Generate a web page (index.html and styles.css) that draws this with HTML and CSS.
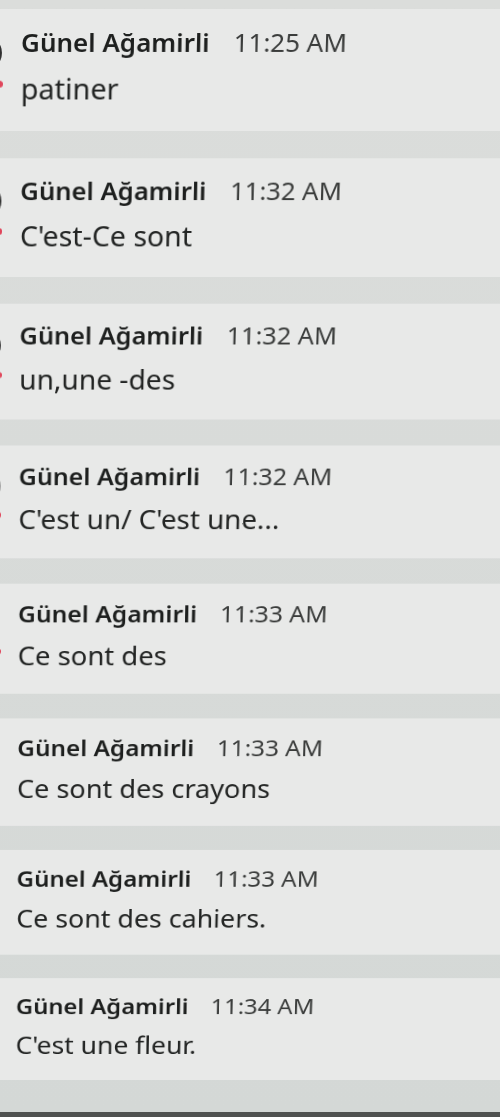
FILE: index.html
```html
<!DOCTYPE html>
<html lang="fr">
<head>
    <meta charset="UTF-8">
    <meta name="viewport" content="width=device-width, initial-scale=1.0">
    <title>Discussion</title>
    <link rel="stylesheet" href="styles.css">
</head>
<body>
    <!-- Ecran (zone de messages) -->
    <div class="screen">
        <div class="chat">
            <div class="message">
                <div class="avatar"></div>
                <div class="message-body">
                    <div class="message-head"><span class="author">Günel Ağamirli</span><span class="time">11:25 AM</span></div>
                    <p class="text">patiner</p>
                </div>
            </div>
            <div class="message">
                <div class="avatar"></div>
                <div class="message-body">
                    <div class="message-head"><span class="author">Günel Ağamirli</span><span class="time">11:32 AM</span></div>
                    <p class="text">C'est-Ce sont</p>
                </div>
            </div>
            <div class="message">
                <div class="avatar"></div>
                <div class="message-body">
                    <div class="message-head"><span class="author">Günel Ağamirli</span><span class="time">11:32 AM</span></div>
                    <p class="text">un,une -des</p>
                </div>
            </div>
            <div class="message">
                <div class="avatar"></div>
                <div class="message-body">
                    <div class="message-head"><span class="author">Günel Ağamirli</span><span class="time">11:32 AM</span></div>
                    <p class="text">C'est un/ C'est une...</p>
                </div>
            </div>
            <div class="message">
                <div class="avatar"></div>
                <div class="message-body">
                    <div class="message-head"><span class="author">Günel Ağamirli</span><span class="time">11:33 AM</span></div>
                    <p class="text">Ce sont des</p>
                </div>
            </div>
            <div class="message">
                <div class="avatar"></div>
                <div class="message-body">
                    <div class="message-head"><span class="author">Günel Ağamirli</span><span class="time">11:33 AM</span></div>
                    <p class="text">Ce sont des crayons</p>
                </div>
            </div>
            <div class="message">
                <div class="avatar"></div>
                <div class="message-body">
                    <div class="message-head"><span class="author">Günel Ağamirli</span><span class="time">11:33 AM</span></div>
                    <p class="text">Ce sont des cahiers.</p>
                </div>
            </div>
            <div class="message">
                <div class="avatar"></div>
                <div class="message-body">
                    <div class="message-head"><span class="author">Günel Ağamirli</span><span class="time">11:34 AM</span></div>
                    <p class="text">C'est une fleur.</p>
                </div>
            </div>
        </div>
    </div>

    <!-- Bord du moniteur -->
    <div class="bezel"></div>
</body>
</html>
```

FILE: styles.css
```css
* {
    margin: 0;
    padding: 0;
    box-sizing: border-box;
    font-family: "Noto Sans", "Open Sans", sans-serif;
}

body {
    display: flex;
    flex-direction: column;
    height: 100vh;
    background-color: #d8dbd9;
    overflow: hidden;
}

/* Zone visible de l'ecran */
.screen {
    flex: 1;
    overflow: hidden;
    background: linear-gradient(180deg, #dbdddb 0%, #d4d8d6 100%);
}

/* Liste des messages, legerement inclinee */
.chat {
    width: 620px;
    padding-top: 9px;
    transform-origin: -40px 40px;
    transform: perspective(1000px) rotateX(-5deg);
}

/* Message */
.message {
    display: flex;
    height: 123px;
    margin-bottom: 28px;
    background-color: #e8e9e8;
}

.avatar {
    flex-shrink: 0;
    position: relative;
    width: 36px;
    height: 36px;
    margin: 26px 19px 0 -34px;
    border-radius: 50%;
    background-color: #2e2e2e;
}

.avatar::after {
    content: "";
    position: absolute;
    right: -1px;
    top: 46px;
    width: 7px;
    height: 7px;
    border-radius: 50%;
    background-color: #e0455a;
}

.message-body {
    padding-top: 15px;
}

.message-head {
    display: flex;
    align-items: baseline;
    gap: 24px;
    line-height: 36px;
}

.author {
    font-size: 26px;
    font-weight: 600;
    color: #1d1f1e;
}

.time {
    font-size: 26px;
    color: #3a3c3b;
}

.text {
    margin-top: 6px;
    font-size: 29px;
    line-height: 46px;
    color: #222423;
}

.bezel {
    height: 5px;
    background-color: #4f5150;
}
```
